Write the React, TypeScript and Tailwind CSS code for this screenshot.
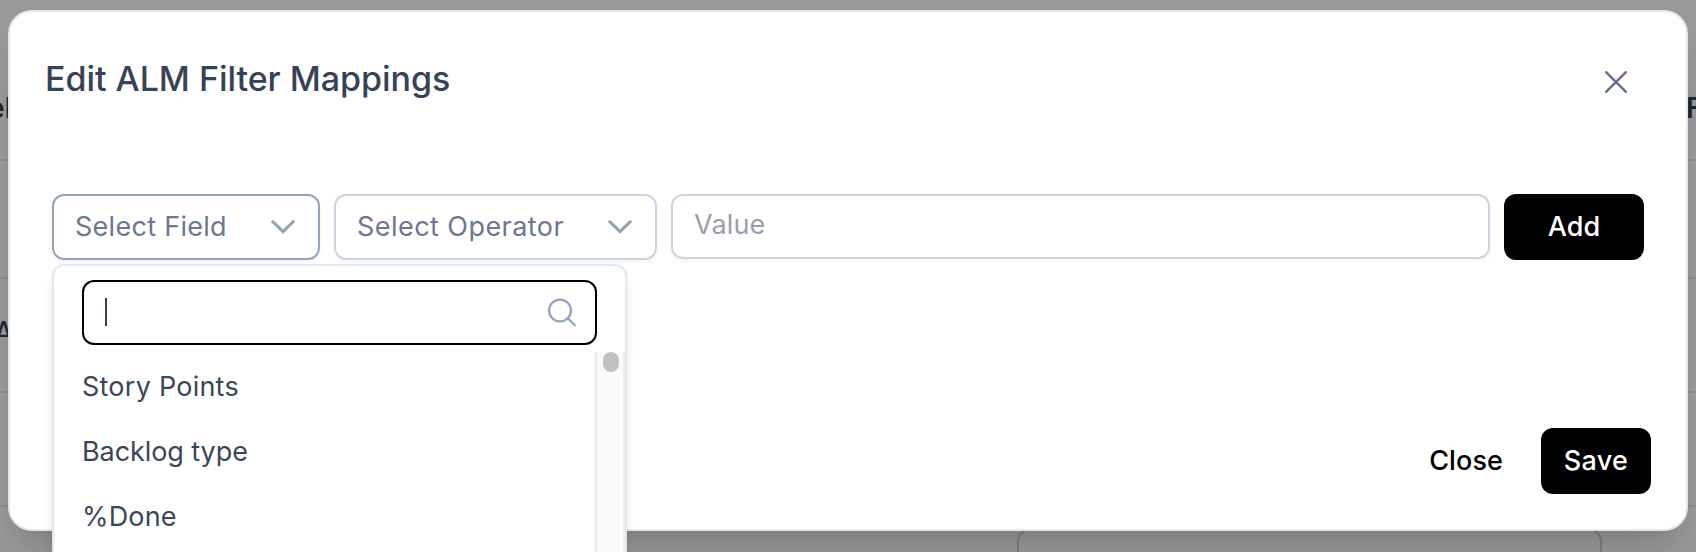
import React from "react";

function Chevron() {
  return (
    <svg width="24" height="14" viewBox="0 0 24 14" fill="none" stroke="#94a3b8" strokeWidth="3" strokeLinecap="round" strokeLinejoin="miter">
      <path d="M1.7 1.7 12 11.7 22.3 1.7" />
    </svg>
  );
}

function Backdrop() {
  return (
    <div className="absolute inset-0 flex flex-col bg-[#999999] text-[28px] font-semibold text-[#1f2634]">
      <div className="flex h-[161px] shrink-0 justify-between border-b-2 border-[#888b90] pt-[92px] leading-[32px]">
        <span className="-ml-[12px] tracking-[0.2px]">el</span>
        <span className="w-[10px]">F</span>
      </div>
      <div className="h-[118px] shrink-0 border-b-2 border-[#888b90]" />
      <div className="h-[114px] shrink-0 border-b-2 border-[#888b90] pt-[36px] text-[21px] leading-[30px]">
        <span className="-ml-[4px]">Δ</span>
      </div>
      <div className="h-[114px] shrink-0 border-b-2 border-[#888b90]" />
      <div className="mt-[21px] ml-[1017px] h-[60px] w-[585px] shrink-0 rounded-[14px] border-2 border-[#7a7f87]" />
    </div>
  );
}

const options = [
  { label: "Story Points", tracking: "tracking-[0.24px]" },
  { label: "Backlog type", tracking: "tracking-[-0.08px]" },
  { label: "%Done", tracking: "tracking-[0.15px]" },
];

function FieldMenu() {
  return (
    <div className="absolute top-[264px] left-[52px] h-[400px] w-[575px] rounded-[12px] border-2 border-[#e2e8f0] bg-white pt-[14px] text-[#3a475a] shadow-[0_8px_12px_-2px_rgba(0,0,0,0.1),0_4px_8px_-4px_rgba(0,0,0,0.1)]">
      <div className="ml-[28px] flex h-[65px] w-[515px] items-center justify-between rounded-[12px] border-2 border-black pr-[19px] pl-[21px]">
        <span className="-mt-[1px] h-[28px] w-[2px] bg-[#334155]" />
        <svg className="overflow-visible" width="30" height="30" viewBox="0 0 30 30" fill="none" stroke="#94a3b8" strokeWidth="2.3" strokeLinecap="round">
          <circle cx="14" cy="12.5" r="10.9" />
          <path d="m21.8 20.3 7 7" />
        </svg>
      </div>
      <div className="mt-[7px] flex h-[310px] justify-between">
        <ul className="pl-[28px] text-[27px] leading-[65px]">
          {options.map((o) => (
            <li key={o.label} className="h-[65px] pt-[2px]">
              <span className={o.tracking}>{o.label}</span>
            </li>
          ))}
        </ul>
        <div className="w-[30px] border-x-2 border-l-[#e8e8e8] border-r-[#ededed] bg-[#fafafa] pl-[6px]">
          <div className="h-[20px] w-[16px] rounded-full bg-[#c1c1c1]" />
        </div>
      </div>
    </div>
  );
}

export default function App() {
  return (
    <div className="relative h-[552px] w-[1696px] overflow-hidden font-['Inter',sans-serif]">
      <Backdrop />
      <div className="relative mx-[8px] pt-[10px]">
        <section className="h-[521px] w-[1680px] rounded-[24px] border-2 border-[#e2e8f0] bg-white shadow-[0_40px_50px_-10px_rgba(0,0,0,0.1),0_16px_20px_-12px_rgba(0,0,0,0.1)]">
          <header className="flex h-[182px] justify-between pt-[46px] pr-[59px] pl-[35px]">
            <h1 className="text-[34px] leading-[42px] font-medium text-[#364357]">
              <span className="tracking-[-0.03px]">Edit ALM Filter Mappings</span>
            </h1>
            <svg className="mt-[13px]" width="22" height="22" viewBox="0 0 22 22" fill="none" stroke="#64748b" strokeWidth="2.6" strokeLinecap="round">
              <path d="M1.3 1.3 20.7 20.7M20.7 1.3 1.3 20.7" />
            </svg>
          </header>
          <div className="flex items-start gap-[14px] pl-[42px] text-[27px] text-[#6b7890]">
            <div className="flex h-[66px] w-[268px] items-center justify-between rounded-[12px] border-2 border-[#94a3b8] pr-[23px] pl-[21px] shadow-[0_2px_4px_rgba(0,0,0,0.05)]">
              <span className="tracking-[0.28px]">Select Field</span>
              <Chevron />
            </div>
            <div className="flex h-[66px] w-[323px] items-center justify-between rounded-[12px] border-2 border-[#cbd5e1] pr-[23px] pl-[21px] shadow-[0_2px_4px_rgba(0,0,0,0.05)]">
              <span className="tracking-[0.45px]">Select Operator</span>
              <Chevron />
            </div>
            <div className="flex h-[65px] w-[819px] items-center rounded-[12px] border-2 border-[#cbd5e1] pb-[3px] pl-[21px] text-[#989fac] shadow-[0_2px_4px_rgba(0,0,0,0.05)]">
              <span className="tracking-[0.15px]">Value</span>
            </div>
            <button className="flex h-[66px] w-[140px] items-center justify-center rounded-[12px] bg-black font-medium text-white">
              <span className="tracking-[0px]">Add</span>
            </button>
          </div>
          <footer className="mt-[168px] flex items-center justify-end gap-[38px] pr-[35px] text-[27px] font-medium">
            <span className="tracking-[0.1px] text-black">Close</span>
            <button className="flex h-[66px] w-[110px] items-center justify-center rounded-[12px] bg-black text-white">
              <span className="tracking-[0.3px]">Save</span>
            </button>
          </footer>
        </section>
      </div>
      <FieldMenu />
    </div>
  );
}
